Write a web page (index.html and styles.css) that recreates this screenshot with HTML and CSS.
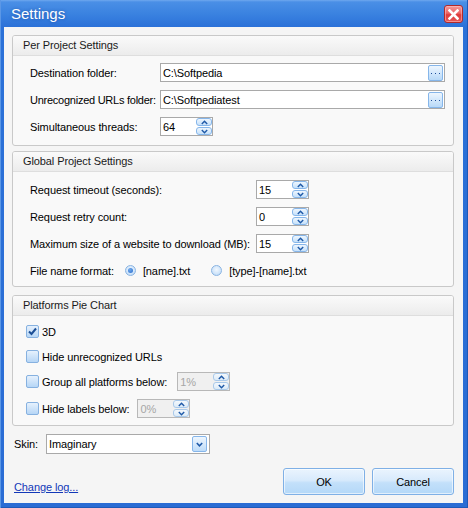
FILE: index.html
```html
<!DOCTYPE html>
<html>
<head>
<meta charset="utf-8">
<title>Settings</title>
<link rel="stylesheet" href="styles.css">
</head>
<body>
<div class="window">
  <div class="titlebar">
    <span class="title">Settings</span>
    <span class="close"><svg width="11" height="11" viewBox="0 0 11 11"><path d="M1.5 1.5 L9.5 9.5 M9.5 1.5 L1.5 9.5" stroke="#fff" stroke-width="2.6" stroke-linecap="square"/></svg></span>
  </div>
  <div class="client">
    <section class="group">
      <div class="ghead">Per Project Settings</div>
      <div class="gbody b1">
        <div class="row"><span class="lbl w130">Destination folder:</span><div class="edit path"><span class="val">C:\Softpedia</span><span class="ellip"><svg width="9" height="3" viewBox="0 0 9 3"><rect x="0" y="1" width="1" height="1" fill="#1f4f9a"/><rect x="4" y="1" width="1" height="1" fill="#1f4f9a"/><rect x="8" y="1" width="1" height="1" fill="#1f4f9a"/></svg></span></div></div>
        <div class="row"><span class="lbl w130 tight">Unrecognized URLs folder:</span><div class="edit path"><span class="val">C:\Softpediatest</span><span class="ellip"><svg width="9" height="3" viewBox="0 0 9 3"><rect x="0" y="1" width="1" height="1" fill="#1f4f9a"/><rect x="4" y="1" width="1" height="1" fill="#1f4f9a"/><rect x="8" y="1" width="1" height="1" fill="#1f4f9a"/></svg></span></div></div>
        <div class="row"><span class="lbl w130">Simultaneous threads:</span><div class="edit spin"><span class="val">64</span><span class="sbtn"><span class="sb"><svg width="7" height="5" viewBox="0 0 7 5"><path d="M0.8 4 L3.5 1.2 L6.2 4" fill="none" stroke="#1f5aa8" stroke-width="1.4"/></svg></span><span class="sb"><svg width="7" height="5" viewBox="0 0 7 5"><path d="M0.8 1 L3.5 3.8 L6.2 1" fill="none" stroke="#1f5aa8" stroke-width="1.4"/></svg></span></span></div></div>
      </div>
    </section>

    <section class="group g2">
      <div class="ghead">Global Project Settings</div>
      <div class="gbody b2">
        <div class="row"><span class="lbl w226">Request timeout (seconds):</span><div class="edit spin"><span class="val">15</span><span class="sbtn"><span class="sb"><svg width="7" height="5" viewBox="0 0 7 5"><path d="M0.8 4 L3.5 1.2 L6.2 4" fill="none" stroke="#1f5aa8" stroke-width="1.4"/></svg></span><span class="sb"><svg width="7" height="5" viewBox="0 0 7 5"><path d="M0.8 1 L3.5 3.8 L6.2 1" fill="none" stroke="#1f5aa8" stroke-width="1.4"/></svg></span></span></div></div>
        <div class="row"><span class="lbl w226">Request retry count:</span><div class="edit spin"><span class="val">0</span><span class="sbtn"><span class="sb"><svg width="7" height="5" viewBox="0 0 7 5"><path d="M0.8 4 L3.5 1.2 L6.2 4" fill="none" stroke="#1f5aa8" stroke-width="1.4"/></svg></span><span class="sb"><svg width="7" height="5" viewBox="0 0 7 5"><path d="M0.8 1 L3.5 3.8 L6.2 1" fill="none" stroke="#1f5aa8" stroke-width="1.4"/></svg></span></span></div></div>
        <div class="row"><span class="lbl w226">Maximum size of a website to download (MB):</span><div class="edit spin"><span class="val">15</span><span class="sbtn"><span class="sb"><svg width="7" height="5" viewBox="0 0 7 5"><path d="M0.8 4 L3.5 1.2 L6.2 4" fill="none" stroke="#1f5aa8" stroke-width="1.4"/></svg></span><span class="sb"><svg width="7" height="5" viewBox="0 0 7 5"><path d="M0.8 1 L3.5 3.8 L6.2 1" fill="none" stroke="#1f5aa8" stroke-width="1.4"/></svg></span></span></div></div>
        <div class="row">
          <span class="lbl">File name format:</span>
          <span class="radio checked first"></span><span class="rtext">[name].txt</span>
          <span class="radio second"></span><span class="rtext">[type]-[name].txt</span>
        </div>
      </div>
    </section>

    <section class="group g3">
      <div class="ghead">Platforms Pie Chart</div>
      <div class="gbody b3">
        <div class="row"><span class="check checked"><svg width="11" height="11" viewBox="0 0 11 11"><path d="M2 5.5 L4.5 8 L9 2.5" fill="none" stroke="#1c4f96" stroke-width="2"/></svg></span><span class="ctext">3D</span></div>
        <div class="row"><span class="check"></span><span class="ctext">Hide unrecognized URLs</span></div>
        <div class="row"><span class="check"></span><span class="ctext">Group all platforms below:</span><div class="edit spin disabled sp1"><span class="val">1%</span><span class="sbtn"><span class="sb"><svg width="7" height="5" viewBox="0 0 7 5"><path d="M0.8 4 L3.5 1.2 L6.2 4" fill="none" stroke="#1f5aa8" stroke-width="1.4"/></svg></span><span class="sb"><svg width="7" height="5" viewBox="0 0 7 5"><path d="M0.8 1 L3.5 3.8 L6.2 1" fill="none" stroke="#1f5aa8" stroke-width="1.4"/></svg></span></span></div></div>
        <div class="row last"><span class="check"></span><span class="ctext">Hide labels below:</span><div class="edit spin disabled sp2"><span class="val">0%</span><span class="sbtn"><span class="sb"><svg width="7" height="5" viewBox="0 0 7 5"><path d="M0.8 4 L3.5 1.2 L6.2 4" fill="none" stroke="#1f5aa8" stroke-width="1.4"/></svg></span><span class="sb"><svg width="7" height="5" viewBox="0 0 7 5"><path d="M0.8 1 L3.5 3.8 L6.2 1" fill="none" stroke="#1f5aa8" stroke-width="1.4"/></svg></span></span></div></div>
      </div>
    </section>

    <div class="skinrow">
      <span class="skinlbl">Skin:</span>
      <div class="edit select"><span class="val">Imaginary</span><span class="ddbtn"><svg width="7" height="5" viewBox="0 0 7 5"><path d="M0.8 1 L3.5 3.8 L6.2 1" fill="none" stroke="#1f5aa8" stroke-width="1.6"/></svg></span></div>
    </div>

    <div class="bottomrow">
      <a class="link">Change log...</a>
      <span class="btn ok">OK</span>
      <span class="btn">Cancel</span>
    </div>
  </div>
</div>
</body>
</html>
```

FILE: styles.css
```css
* { box-sizing: border-box; }
html, body { margin: 0; padding: 0; }
body {
  font-family: "Liberation Sans", Arial, sans-serif;
  font-size: 11px;
  letter-spacing: -0.1px;
  color: #000;
  background: #fff;
}
.window {
  width: 468px;
  height: 508px;
  display: flex;
  flex-direction: column;
  padding: 0 5px 5px 4px;
  background: linear-gradient(to bottom, #6fa8ee 0px, #4a8fe6 2px, #3a82e0 14px, #2b71d8 27px, #2a6cd4 100%);
  box-shadow: inset 1px 0 0 #5b97e6, inset -1px 0 0 #1e5ab8, inset 0 -1px 0 #1e5ab8;
}
.titlebar {
  height: 27px;
  display: flex;
  align-items: flex-start;
  justify-content: space-between;
}
.title {
  color: #fff;
  font-size: 15px;
  letter-spacing: 0;
  line-height: 15px;
  margin: 6px 0 0 7px;
  text-shadow: 0 0 3px rgba(20, 60, 140, 0.6);
}
.close {
  width: 19px;
  height: 18px;
  margin-top: 5px;
  border: 1px solid #b22a2a;
  border-radius: 3px;
  background: linear-gradient(to bottom, #f49a9a 0%, #ec6464 45%, #dd3a3a 55%, #e65858 100%);
  display: flex;
  align-items: center;
  justify-content: center;
  box-shadow: inset 0 0 0 1px rgba(255, 200, 200, 0.5);
}
.client {
  flex: 1;
  background: #f5f5f5;
  padding: 8px 9px 8px 8px;
  display: flex;
  flex-direction: column;
}
.group {
  border: 1px solid #c9c9c9;
  border-radius: 3px;
  background: #f9f9f9;
}
.g2 { margin-top: 5px; }
.g3 { margin-top: 8px; }
.ghead {
  height: 20px;
  line-height: 19px;
  border-bottom: 1px solid #dedede;
  background: linear-gradient(to bottom, #fafafa, #ececec);
  padding-left: 10px;
  color: #1a1a1a;
  border-radius: 2px 2px 0 0;
}
.gbody { display: flex; flex-direction: column; }
.b1 { padding: 7px 8px 9px 17px; gap: 8px; }
.b2 { padding: 8px 8px 6px 17px; gap: 8px; }
.b3 { padding: 6px 8px 7px 13px; gap: 6px; }
.b3 .row.last { margin-top: 2px; }
.row {
  height: 19px;
  display: flex;
  align-items: center;
}
.lbl { white-space: nowrap; flex-shrink: 0; }
.tight { letter-spacing: -0.25px; }
.w130 { width: 130px; }
.w226 { width: 226px; }

.edit {
  height: 19px;
  border: 1px solid #a9a9a9;
  background: #fff;
  display: flex;
  align-items: center;
  padding-left: 2px;
  flex-shrink: 0;
}
.edit .val { flex: 1; white-space: nowrap; }
.path { flex: 1; flex-shrink: 1; }
.ellip {
  width: 15px;
  height: 16px;
  margin-right: 1px;
  border: 1px solid #86b6ea;
  border-radius: 2px;
  background: linear-gradient(to bottom, #eef6fe 0%, #d3e8fc 50%, #b8d9f8 100%);
  display: flex;
  align-items: center;
  justify-content: center;
  padding-top: 2px;
}
.spin { width: 53px; }
.sbtn {
  width: 16px;
  height: 17px;
  display: flex;
  flex-direction: column;
  gap: 1px;
}
.sb {
  flex: 1;
  border: 1px solid #86b6ea;
  border-radius: 3px;
  background: linear-gradient(to bottom, #eef6fe, #c6e1fa);
  display: flex;
  align-items: center;
  justify-content: center;
}
.disabled { background: #f0f0f0; border-color: #b8b8b8; }
.disabled .val { color: #a6a6a6; }
.disabled .sb { border-color: #a9c9ea; background: linear-gradient(to bottom, #f4f8fc, #dcebf8); }
.sp1 { margin-left: 10px; }
.sp2 { margin-left: 8px; }

.radio {
  width: 11px;
  height: 11px;
  border-radius: 50%;
  border: 1px solid #8ab4e2;
  background: radial-gradient(circle at 50% 40%, #f2f8fe 0%, #cfe4fa 60%, #b2d3f4 100%);
  position: relative;
  flex-shrink: 0;
}
.radio.checked::after {
  content: "";
  position: absolute;
  left: 2px; top: 2px;
  width: 5px; height: 5px;
  border-radius: 50%;
  background: radial-gradient(circle at 40% 35%, #6fa9ec, #2a6ccb);
}
.radio.first { margin-left: 11px; }
.radio.second { margin-left: 21px; }
.rtext { margin-left: 7px; white-space: nowrap; }

.check {
  width: 13px;
  height: 13px;
  border: 1px solid #86b1e0;
  border-radius: 2px;
  background: linear-gradient(to bottom, #e6f1fd, #b6d6f6);
  display: flex;
  align-items: center;
  justify-content: center;
  flex-shrink: 0;
}
.ctext { margin-left: 3px; white-space: nowrap; }

.skinrow {
  margin-top: 8px;
  height: 20px;
  display: flex;
  align-items: center;
  padding-left: 2px;
}
.skinlbl { width: 32px; }
.select { width: 164px; height: 20px; }
.ddbtn {
  width: 15px;
  height: 16px;
  margin-right: 2px;
  border: 1px solid #86b6ea;
  border-radius: 2px;
  background: linear-gradient(to bottom, #eef6fe, #bedcf9);
  display: flex;
  align-items: center;
  justify-content: center;
}

.bottomrow {
  margin-top: auto;
  display: flex;
  align-items: center;
  gap: 7px;
  padding-left: 2px;
}
.link {
  color: #1238b8;
  text-decoration: underline;
  margin-right: auto;
  margin-top: 11px;
}
.btn {
  width: 82px;
  height: 27px;
  border: 1px solid #7fb0e6;
  border-radius: 3px;
  background: linear-gradient(to bottom, #eaf4fe 0%, #d8eafc 45%, #c3e0fa 55%, #b4d8f8 100%);
  box-shadow: inset 0 0 0 1px rgba(255, 255, 255, 0.6);
  display: flex;
  align-items: center;
  justify-content: center;
  color: #000;
}
```
